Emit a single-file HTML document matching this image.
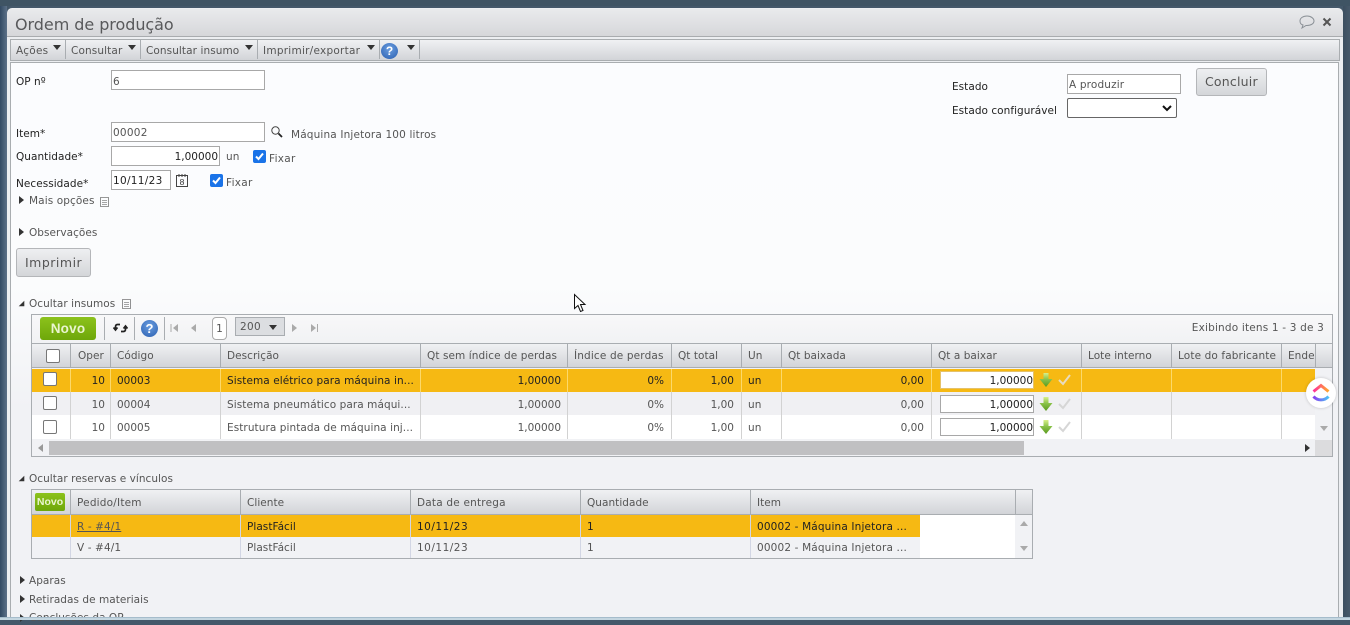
<!DOCTYPE html>
<html><head><meta charset="utf-8"><style>
html,body{margin:0;padding:0}
body{width:1350px;height:620px;overflow:hidden;position:relative;background:#44586a;font-family:"DejaVu Sans",sans-serif;font-size:10.5px;color:#555}
div,span,svg{position:absolute}
.t{white-space:nowrap;line-height:14px;letter-spacing:.04px;margin-top:1px}
.k{color:#222}
.inp{background:#fff;border:1px solid #a8a8a8;box-sizing:border-box}
.tri{width:0;height:0;border-left:4px solid transparent;border-right:4px solid transparent;border-top:5px solid #333}
.r{width:0;height:0;border-top:4px solid transparent;border-bottom:4px solid transparent;border-left:5px solid #333}
.d{width:0;height:0;border-left:7px solid transparent;border-bottom:7px solid #333;transform:scale(.8)}
.sep{width:1px;background:#a9adb1}
.hdr{background:linear-gradient(#f0f1f3,#d2d4d8)}
.cb{width:12px;height:12px;background:#fff;border:1px solid #777;border-radius:2px}
.chk{width:13px;height:13px;background:#1a73e8;border-radius:2px}
.btn{box-sizing:border-box;border:1px solid #b4b6b9;border-radius:3px;background:linear-gradient(#eeeff1,#d4d6d9)}
</style></head><body>
<div style="left:0;top:0;width:1350px;height:6px;background:#3f5464"></div>
<div style="left:0;top:6px;width:7px;height:614px;background:linear-gradient(90deg,#324a63,#5c7188)"></div>
<div style="left:1343px;top:6px;width:7px;height:614px;background:linear-gradient(90deg,#3c4f60,#47596a)"></div>
<div style="left:7px;top:8px;width:1336px;height:612px;background:#eceef1;border-radius:5px 5px 0 0"></div>
<div style="left:7px;top:9px;width:1336px;height:27px;background:linear-gradient(#e9eaec,#d6d7da);border-bottom:1px solid #a9acaf;border-radius:5px 5px 0 0"></div>
<div class="t" style="left:15px;top:14px;font-size:16px;line-height:20px;letter-spacing:-.05px;color:#58595b">Ordem de produção</div>
<svg style="left:1298px;top:14px" width="18" height="16" viewBox="0 0 18 16"><path d="M9 2C5 2 2 4 2 7c0 2 1 3.500 3 4l-1 3 4-2.500h1c4 0 7-2 7-4.500S13 2 9 2z" fill="none" stroke="#8a9096"/></svg>
<svg style="left:1322px;top:17px" width="10" height="10" viewBox="0 0 10 10"><path d="M1.500 1.500l7 7M8.500 1.500l-7 7" stroke="#555" stroke-width="2"/></svg>

<div class="hdr" style="left:10px;top:39px;width:1328px;height:20px;border:1px solid #a9adb0"></div>
<div class="t" style="left:16px;top:43px;letter-spacing:.25px">Ações</div><div class="tri" style="left:53px;top:45px"></div>
<div class="sep" style="left:65px;top:40px;height:19px"></div>
<div class="t" style="left:71px;top:43px;letter-spacing:.12px">Consultar</div><div class="tri" style="left:128px;top:45px"></div>
<div class="sep" style="left:140px;top:40px;height:19px"></div>
<div class="t" style="left:146px;top:43px;letter-spacing:.08px">Consultar insumo</div><div class="tri" style="left:245px;top:45px"></div>
<div class="sep" style="left:257px;top:40px;height:19px"></div>
<div class="t" style="left:263px;top:43px;letter-spacing:.25px">Imprimir/exportar</div><div class="tri" style="left:367px;top:45px"></div>
<div class="sep" style="left:379px;top:40px;height:19px"></div>
<div style="left:381px;top:43px;width:17px;height:16px;border-radius:50%;background:radial-gradient(circle at 50% 35%,#6b9ee0,#2a5fb0);color:#fff;font:bold 12px/16px 'Liberation Sans';text-align:center">?</div>
<div class="tri" style="left:407px;top:45px"></div>
<div class="sep" style="left:419px;top:40px;height:19px"></div>

<div style="left:10px;top:62px;width:1329px;height:558px;box-sizing:border-box;border:1px solid #a9adb0;border-bottom:0;background:linear-gradient(#fbfcfe 0,#fbfcfd 40%,#f1f2f5 62%,#f1f2f5)"></div>

<div class="t k" style="left:16px;top:74px">OP nº</div>
<div class="inp" style="left:111px;top:70px;width:154px;height:20px"></div><div class="t" style="left:113px;top:74px">6</div>
<div class="t k" style="left:16px;top:126px">Item*</div>
<div class="inp" style="left:111px;top:122px;width:154px;height:20px"></div><div class="t" style="left:113px;top:125px;letter-spacing:.25px">00002</div>
<svg style="left:270px;top:125px" width="14" height="14" viewBox="0 0 14 14"><circle cx="5.500" cy="5.500" r="3.700" fill="none" stroke="#444" stroke-width="1"/><path d="M8.500 8.500l3.500 3.500" stroke="#222" stroke-width="1.800"/></svg>
<div class="t" style="left:291px;top:127px;letter-spacing:.15px">Máquina Injetora 100 litros</div>
<div class="t k" style="left:16px;top:149px">Quantidade*</div>
<div class="inp" style="left:111px;top:146px;width:109px;height:20px"></div><div class="t k" style="left:150px;width:68px;text-align:right;top:149px;letter-spacing:0">1,00000</div>
<div class="t" style="left:226px;top:149px">un</div>
<div class="chk" style="left:253px;top:150px"></div><svg style="left:253px;top:150px" width="13" height="13" viewBox="0 0 13 13"><path d="M3 6.500l2.500 2.500L10 3.500" fill="none" stroke="#fff" stroke-width="2"/></svg>
<div class="t" style="left:269px;top:151px;letter-spacing:.3px">Fixar</div>
<div class="t k" style="left:16px;top:176px">Necessidade*</div>
<div class="inp" style="left:111px;top:170px;width:60px;height:20px"></div><div class="t k" style="left:113px;top:173px;letter-spacing:.3px">10/11/23</div>
<svg style="left:175px;top:173px" width="14" height="15" viewBox="0 0 14 15"><rect x="1.500" y="2.500" width="11" height="11" fill="none" stroke="#444"/><path d="M4 1v3M7 1v3M10 1v3" stroke="#444"/><text x="7" y="12" font-size="8.500" text-anchor="middle" fill="#333" font-family="Liberation Sans">8</text></svg>
<div class="chk" style="left:210px;top:174px"></div><svg style="left:210px;top:174px" width="13" height="13" viewBox="0 0 13 13"><path d="M3 6.500l2.500 2.500L10 3.500" fill="none" stroke="#fff" stroke-width="2"/></svg>
<div class="t" style="left:226px;top:175px;letter-spacing:.3px">Fixar</div>
<div class="r" style="left:19px;top:196px"></div><div class="t" style="left:29px;top:193px;letter-spacing:.1px">Mais opções</div>
<svg style="left:99px;top:196px" width="11" height="12" viewBox="0 0 11 12"><path d="M1.500 1.500h8v9h-8z" fill="none" stroke="#777" stroke-width=".8"/><path d="M3 4.500h5M3 6.500h5M3 8.500h5" fill="none" stroke="#888" stroke-width=".7"/></svg>
<div class="r" style="left:19px;top:228px"></div><div class="t" style="left:29px;top:225px">Observações</div>
<div class="btn" style="left:16px;top:248px;width:75px;height:29px"></div><div class="t" style="left:25px;top:255px;font-size:12.500px;letter-spacing:.5px">Imprimir</div>

<div class="t k" style="left:952px;top:79px">Estado</div>
<div class="inp" style="left:1067px;top:74px;width:114px;height:20px"></div><div class="t" style="left:1069px;top:77px;letter-spacing:.15px">A produzir</div>
<div class="btn" style="left:1196px;top:68px;width:71px;height:28px"></div><div class="t" style="left:1205px;top:74px;font-size:12.500px;letter-spacing:.2px">Concluir</div>
<div class="t k" style="left:952px;top:103px">Estado configurável</div>
<div style="left:1067px;top:98px;width:110px;height:20px;box-sizing:border-box;background:#fff;border:1px solid #666;border-radius:2px"></div>
<svg style="left:1162px;top:105px" width="10" height="7" viewBox="0 0 10 7"><path d="M1 1l4 4 4-4" fill="none" stroke="#111" stroke-width="2"/></svg>

<div class="d" style="left:18px;top:300px"></div><div class="t" style="left:29px;top:296px">Ocultar insumos</div>
<svg style="left:121px;top:298px" width="11" height="12" viewBox="0 0 11 12"><path d="M1.500 1.500h8v9h-8z" fill="none" stroke="#777" stroke-width=".8"/><path d="M3 4.500h5M3 6.500h5M3 8.500h5" fill="none" stroke="#888" stroke-width=".7"/></svg>

<!-- grid 1 -->
<div style="left:31px;top:314px;width:1302px;height:143px;box-sizing:border-box;border:1px solid #a9adb1;background:#f1f2f5"></div>
<div style="left:32px;top:315px;width:1300px;height:28px;background:linear-gradient(#f8f8f9,#f1f2f4)"></div>
<div style="left:40px;top:317px;width:56px;height:23px;background:linear-gradient(#8cc21c,#6ea70a);border-radius:3px;color:#eaf5d0;font:bold 13.500px/23px 'Liberation Sans';text-align:center;letter-spacing:.2px">Novo</div>
<div class="sep" style="left:104px;top:317px;height:23px"></div>
<svg style="left:113px;top:321px" width="15" height="14" viewBox="0 0 15 14"><path d="M7 3.500H4.500Q2.500 3.500 2.500 6v2M.5 6.500l2 2.500 2-2.500M8 10.500h2.500q2 0 2-2.500V6M10.500 7.500l2-2.500 2 2.500" fill="none" stroke="#222" stroke-width="1.700"/></svg>
<div class="sep" style="left:134px;top:317px;height:23px"></div>
<div style="left:141px;top:320px;width:17px;height:17px;border-radius:50%;background:radial-gradient(circle at 50% 35%,#6b9ee0,#2a5fb0);color:#fff;font:bold 13px/17px 'Liberation Sans';text-align:center">?</div>
<div class="sep" style="left:164px;top:317px;height:23px"></div>
<svg style="left:170px;top:322px" width="150" height="12" viewBox="0 0 150 12"><path d="M1 2v8" stroke="#aaa"/><path d="M8 2L3 6l5 4zM26 2l-5 4 5 4zM122 2l5 4-5 4zM141 2l5 4-5 4z" fill="#aaa"/><path d="M147.500 2v8" stroke="#aaa"/></svg>
<div style="left:212px;top:317px;width:15px;height:23px;box-sizing:border-box;border:1px solid #aaa;border-radius:4px;background:#fff;text-align:center;line-height:22px">1</div>
<div style="left:235px;top:317px;width:50px;height:19px;box-sizing:border-box;border:1px solid #a9adb1;background:#dcdee1"></div><div class="t" style="left:240px;top:319px;letter-spacing:.3px">200</div><div class="tri" style="left:269px;top:325px;border-left-width:4.500px;border-right-width:4.500px"></div>
<div class="t" style="right:26px;top:320px;letter-spacing:.18px">Exibindo itens 1 - 3 de 3</div>

<div class="hdr" style="left:32px;top:343px;width:1300px;height:25px;border-top:1px solid #a9adb1;border-bottom:1px solid #a9adb1;box-sizing:border-box"></div>
<div style="left:32px;top:369px;width:1283px;height:23px;background:#f6b913"></div>
<div style="left:32px;top:392px;width:1283px;height:23px;background:#f0f0f3"></div>
<div style="left:32px;top:415px;width:1283px;height:24px;background:#fff"></div>
<div style="left:1315px;top:369px;width:17px;height:71px;background:#f1f2f5"></div>

<div class="sep" style="left:70px;top:344px;height:24px"></div><div class="sep" style="left:110px;top:344px;height:24px"></div><div class="sep" style="left:220px;top:344px;height:24px"></div><div class="sep" style="left:420px;top:344px;height:24px"></div><div class="sep" style="left:567px;top:344px;height:24px"></div><div class="sep" style="left:671px;top:344px;height:24px"></div><div class="sep" style="left:741px;top:344px;height:24px"></div><div class="sep" style="left:781px;top:344px;height:24px"></div><div class="sep" style="left:931px;top:344px;height:24px"></div><div class="sep" style="left:1081px;top:344px;height:24px"></div><div class="sep" style="left:1171px;top:344px;height:24px"></div><div class="sep" style="left:1281px;top:344px;height:24px"></div><div class="sep" style="left:1315px;top:344px;height:24px"></div>

<div style="left:70px;top:369px;width:1px;height:23px;background:#fcd96a"></div><div style="left:110px;top:369px;width:1px;height:23px;background:#fcd96a"></div><div style="left:220px;top:369px;width:1px;height:23px;background:#fcd96a"></div><div style="left:420px;top:369px;width:1px;height:23px;background:#fcd96a"></div><div style="left:567px;top:369px;width:1px;height:23px;background:#fcd96a"></div><div style="left:671px;top:369px;width:1px;height:23px;background:#fcd96a"></div><div style="left:741px;top:369px;width:1px;height:23px;background:#fcd96a"></div><div style="left:781px;top:369px;width:1px;height:23px;background:#fcd96a"></div><div style="left:931px;top:369px;width:1px;height:23px;background:#fcd96a"></div><div style="left:1081px;top:369px;width:1px;height:23px;background:#fcd96a"></div><div style="left:1171px;top:369px;width:1px;height:23px;background:#fcd96a"></div><div style="left:1281px;top:369px;width:1px;height:23px;background:#fcd96a"></div>
<div style="left:70px;top:392px;width:1px;height:47px;background:#d2d2d2"></div><div style="left:110px;top:392px;width:1px;height:47px;background:#d2d2d2"></div><div style="left:220px;top:392px;width:1px;height:47px;background:#d2d2d2"></div><div style="left:420px;top:392px;width:1px;height:47px;background:#d2d2d2"></div><div style="left:567px;top:392px;width:1px;height:47px;background:#d2d2d2"></div><div style="left:671px;top:392px;width:1px;height:47px;background:#d2d2d2"></div><div style="left:741px;top:392px;width:1px;height:47px;background:#d2d2d2"></div><div style="left:781px;top:392px;width:1px;height:47px;background:#d2d2d2"></div><div style="left:931px;top:392px;width:1px;height:47px;background:#d2d2d2"></div><div style="left:1081px;top:392px;width:1px;height:47px;background:#d2d2d2"></div><div style="left:1171px;top:392px;width:1px;height:47px;background:#d2d2d2"></div><div style="left:1281px;top:392px;width:1px;height:47px;background:#d2d2d2"></div>

<div class="cb" style="left:46px;top:349px"></div>
<div class="t" style="left:78px;top:348px">Oper</div><div class="t" style="left:117px;top:348px">Código</div><div class="t" style="left:227px;top:348px">Descrição</div><div class="t" style="left:427px;top:348px;letter-spacing:.08px">Qt sem índice de perdas</div><div class="t" style="left:574px;top:348px;letter-spacing:.15px">Índice de perdas</div><div class="t" style="left:678px;top:348px">Qt total</div><div class="t" style="left:748px;top:348px">Un</div><div class="t" style="left:788px;top:348px">Qt baixada</div><div class="t" style="left:938px;top:348px">Qt a baixar</div><div class="t" style="left:1088px;top:348px">Lote interno</div><div class="t" style="left:1178px;top:348px;letter-spacing:.12px">Lote do fabricante</div><div class="t" style="left:1288px;top:348px">Ende</div>

<div class="cb" style="left:43px;top:372px"></div><div class="cb" style="left:43px;top:396px"></div><div class="cb" style="left:43px;top:420px"></div>

<div class="t k" style="left:70px;width:35px;text-align:right;top:373px;letter-spacing:0">10</div><div class="t k" style="left:117px;top:373px;letter-spacing:0">00003</div><div class="t k" style="left:227px;top:373px;letter-spacing:.07px">Sistema elétrico para máquina in...</div><div class="t k" style="right:789px;top:373px;letter-spacing:0">1,00000</div><div class="t k" style="right:686px;top:373px;letter-spacing:0">0%</div><div class="t k" style="right:616px;top:373px;letter-spacing:0">1,00</div><div class="t k" style="left:748px;top:373px">un</div><div class="t k" style="right:426px;top:373px;letter-spacing:0">0,00</div>
<div class="t" style="left:70px;width:35px;text-align:right;top:397px;letter-spacing:0">10</div><div class="t" style="left:117px;top:397px;letter-spacing:0">00004</div><div class="t" style="left:227px;top:397px;letter-spacing:.07px">Sistema pneumático para máqui...</div><div class="t" style="right:789px;top:397px;letter-spacing:0">1,00000</div><div class="t" style="right:686px;top:397px;letter-spacing:0">0%</div><div class="t" style="right:616px;top:397px;letter-spacing:0">1,00</div><div class="t" style="left:748px;top:397px">un</div><div class="t" style="right:426px;top:397px;letter-spacing:0">0,00</div>
<div class="t" style="left:70px;width:35px;text-align:right;top:420px;letter-spacing:0">10</div><div class="t" style="left:117px;top:420px;letter-spacing:0">00005</div><div class="t" style="left:227px;top:420px;letter-spacing:.07px">Estrutura pintada de máquina inj...</div><div class="t" style="right:789px;top:420px;letter-spacing:0">1,00000</div><div class="t" style="right:686px;top:420px;letter-spacing:0">0%</div><div class="t" style="right:616px;top:420px;letter-spacing:0">1,00</div><div class="t" style="left:748px;top:420px">un</div><div class="t" style="right:426px;top:420px;letter-spacing:0">0,00</div>

<div class="inp" style="left:940px;top:371px;width:94px;height:18px;border-color:#e5c26a"></div><div class="t k" style="right:317px;top:373px;letter-spacing:0">1,00000</div>
<div class="inp" style="left:940px;top:395px;width:94px;height:18px"></div><div class="t k" style="right:317px;top:397px;letter-spacing:0">1,00000</div>
<div class="inp" style="left:940px;top:418px;width:94px;height:18px"></div><div class="t k" style="right:317px;top:420px;letter-spacing:0">1,00000</div>

<svg style="left:1039px;top:372px" width="14" height="17" viewBox="0 0 14 17"><defs><linearGradient id="g" x1="0" y1="0" x2="0" y2="1"><stop offset="0" stop-color="#d8f08a"/><stop offset=".45" stop-color="#8bc34a"/><stop offset="1" stop-color="#5a9a1f"/></linearGradient></defs><path d="M4.500 1h5v6H13.500l-6.500 8-6.500-8h4z" fill="url(#g)"/></svg>
<svg style="left:1039px;top:396px" width="14" height="17" viewBox="0 0 14 17"><path d="M4.500 1h5v6H13.500l-6.500 8-6.500-8h4z" fill="url(#g)"/></svg>
<svg style="left:1039px;top:419px" width="14" height="17" viewBox="0 0 14 17"><path d="M4.500 1h5v6H13.500l-6.500 8-6.500-8h4z" fill="url(#g)"/></svg>
<svg style="left:1057px;top:373px" width="15" height="14" viewBox="0 0 15 14"><path d="M2 7l4 4 7-9" fill="none" stroke="#e8dcc0" stroke-width="2"/></svg>
<svg style="left:1057px;top:397px" width="15" height="14" viewBox="0 0 15 14"><path d="M2 7l4 4 7-9" fill="none" stroke="#d6d6d6" stroke-width="2"/></svg>
<svg style="left:1057px;top:420px" width="15" height="14" viewBox="0 0 15 14"><path d="M2 7l4 4 7-9" fill="none" stroke="#d6d6d6" stroke-width="2"/></svg>

<div style="left:49px;top:441px;width:975px;height:14px;background:#c0c0c2"></div>
<svg style="left:37px;top:443px" width="8" height="10" viewBox="0 0 8 10"><path d="M6 1L1 5l5 4z" fill="#999"/></svg>
<svg style="left:1303px;top:443px" width="8" height="10" viewBox="0 0 8 10"><path d="M2 1l5 4-5 4z" fill="#333"/></svg>
<div style="left:1315px;top:440px;width:17px;height:16px;background:#dcdcde"></div>
<svg style="left:1318px;top:425px" width="12" height="8" viewBox="0 0 12 8"><path d="M2 1h8L6 6z" fill="#aaa"/></svg>

<div style="left:1306px;top:378px;width:30px;height:30px;border-radius:50%;background:#fff;box-shadow:0 0 3px rgba(0,0,0,.2)"></div>
<svg style="left:1310px;top:382px" width="22" height="22" viewBox="0 0 22 22"><defs><linearGradient id="u" x1="0" y1="0" x2="1" y2="0"><stop offset="0" stop-color="#ff2e9c"/><stop offset="1" stop-color="#ffa92b"/></linearGradient><linearGradient id="l" x1="0" y1="0" x2="1" y2="0"><stop offset="0" stop-color="#8b3df0"/><stop offset="1" stop-color="#4cc4f5"/></linearGradient></defs><path d="M3.500 9.500L11 3.500l7.500 6" fill="none" stroke="url(#u)" stroke-width="3"/><path d="M3.500 14.500c4 4.500 11 4.500 15 0" fill="none" stroke="url(#l)" stroke-width="3"/></svg>

<!-- grid 2 -->
<div class="d" style="left:18px;top:475px"></div><div class="t" style="left:29px;top:471px">Ocultar reservas e vínculos</div>
<div style="left:31px;top:489px;width:1002px;height:70px;box-sizing:border-box;border:1px solid #a9adb1;background:#f1f2f5"></div>
<div class="hdr" style="left:32px;top:490px;width:1000px;height:25px;border-bottom:1px solid #a9adb1;box-sizing:border-box"></div>
<div style="left:32px;top:515px;width:888px;height:22px;background:#f6b913"></div>
<div style="left:920px;top:515px;width:95px;height:43px;background:#fff"></div>
<div class="sep" style="left:70px;top:490px;height:25px"></div><div class="sep" style="left:240px;top:490px;height:25px"></div><div class="sep" style="left:410px;top:490px;height:25px"></div><div class="sep" style="left:580px;top:490px;height:25px"></div><div class="sep" style="left:750px;top:490px;height:25px"></div><div class="sep" style="left:1015px;top:490px;height:25px"></div>
<div style="left:70px;top:515px;width:1px;height:43px;background:#d2d6e4"></div><div style="left:240px;top:515px;width:1px;height:43px;background:#d2d6e4"></div><div style="left:410px;top:515px;width:1px;height:43px;background:#d2d6e4"></div><div style="left:580px;top:515px;width:1px;height:43px;background:#d2d6e4"></div><div style="left:750px;top:515px;width:1px;height:43px;background:#d2d6e4"></div>
<div style="left:35px;top:493px;width:30px;height:18px;background:linear-gradient(#8cc21c,#6ea70a);border-radius:2px;color:#eaf5d0;font:bold 10.500px/18px 'Liberation Sans';text-align:center">Novo</div>
<div class="t" style="left:77px;top:495px;letter-spacing:.2px">Pedido/Item</div><div class="t" style="left:247px;top:495px">Cliente</div><div class="t" style="left:417px;top:495px;letter-spacing:.2px">Data de entrega</div><div class="t" style="left:587px;top:495px">Quantidade</div><div class="t" style="left:757px;top:495px">Item</div>
<div class="t" style="left:77px;top:519px;text-decoration:underline;letter-spacing:.1px">R - #4/1</div><div class="t k" style="left:247px;top:519px">PlastFácil</div><div class="t k" style="left:417px;top:519px;letter-spacing:.5px">10/11/23</div><div class="t k" style="left:587px;top:519px">1</div><div class="t k" style="left:757px;top:519px;letter-spacing:.15px">00002 - Máquina Injetora ...</div>
<div class="t" style="left:77px;top:540px;letter-spacing:.1px">V - #4/1</div><div class="t" style="left:247px;top:540px">PlastFácil</div><div class="t" style="left:417px;top:540px;letter-spacing:.5px">10/11/23</div><div class="t" style="left:587px;top:540px">1</div><div class="t" style="left:757px;top:540px;letter-spacing:.15px">00002 - Máquina Injetora ...</div>
<svg style="left:1018px;top:519px" width="12" height="36" viewBox="0 0 12 36"><path d="M2 7h8L6 2zM2 27h8l-4 5z" fill="#aaa"/></svg>

<div class="r" style="left:20px;top:576px"></div><div class="t" style="left:29px;top:573px">Aparas</div>
<div class="r" style="left:20px;top:595px"></div><div class="t" style="left:29px;top:592px">Retiradas de materiais</div>
<div class="r" style="left:20px;top:614px"></div><div class="t" style="left:29px;top:610px">Conclusões da OP</div>

<svg style="left:573px;top:293px" width="14" height="22" viewBox="0 0 14 22"><path d="M1.500 1.500v14l3.500-3 2.500 6 2.500-1-2.500-6h4.500z" fill="#fff" stroke="#111"/></svg>
<div style="left:0;top:617px;width:1350px;height:3px;background:#c4d6e0;border-top:1px solid #a5bccb;box-sizing:border-box"></div>
</body></html>
